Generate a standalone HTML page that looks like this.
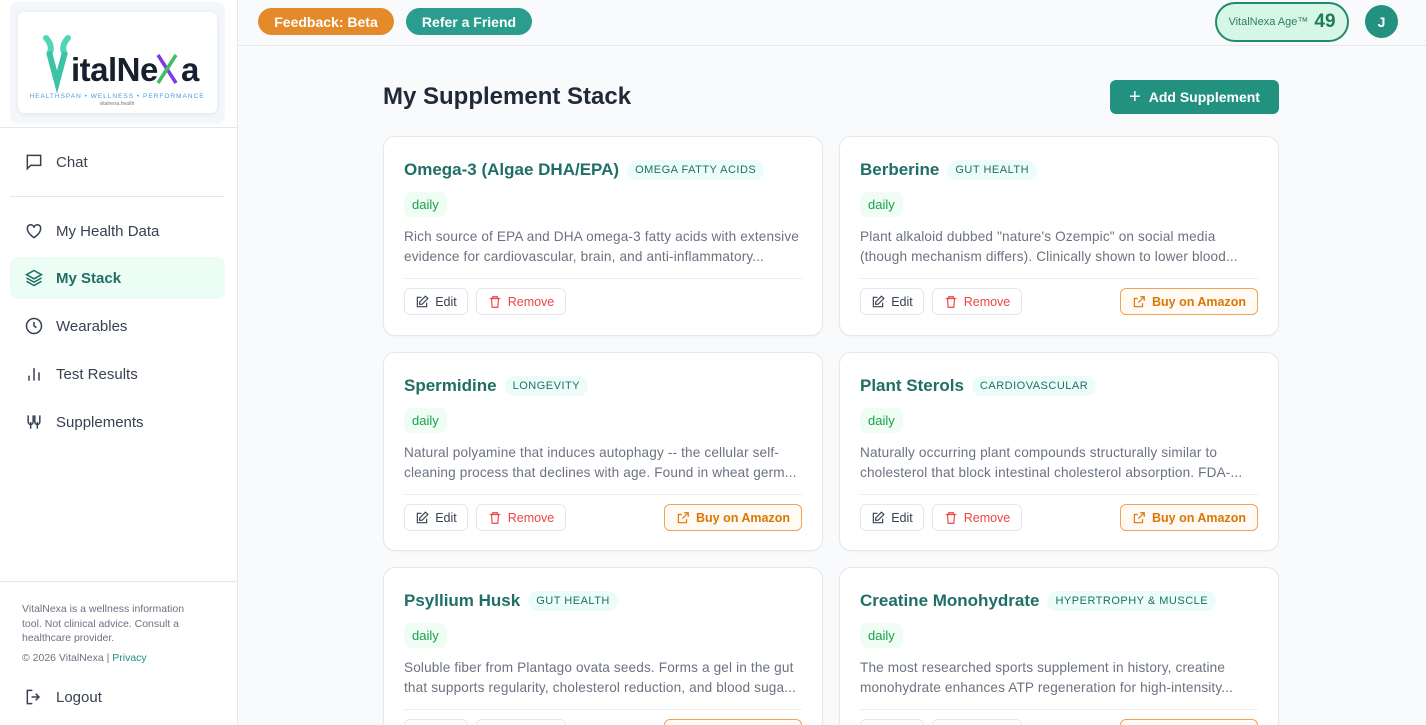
<!DOCTYPE html>
<html style="width:1426px;height:725px;overflow:hidden"><head><meta charset="utf-8"><style>
*{box-sizing:border-box;margin:0;padding:0}
body{width:1426px;height:725px;overflow:hidden;font-family:"Liberation Sans",sans-serif;background:#f9fafb;position:relative;color:#1f2937}
.sb{position:absolute;left:0;top:0;width:238px;height:725px;background:#fff;border-right:1px solid #e5e7eb}
.logo{position:absolute;left:10px;top:2px;width:215px;height:122px;background:#f3f6fa;border-radius:8px}
.logo .in{position:absolute;left:8px;top:10px;width:199px;height:101px;background:#fff;border-radius:6px;box-shadow:0 1px 4px rgba(0,0,0,.08)}
.nav{position:absolute;left:10px;width:215px;height:42px;display:flex;align-items:center;padding-left:14px;font-size:15px;color:#374151}
.nav svg{width:20px;height:20px;margin-right:12px;stroke:#374151;fill:none;stroke-width:1.8}
.nav.act{background:#ecfdf5;border-radius:8px;color:#1f6f66;font-weight:bold}
.nav.act svg{stroke:#1f6f66}
.hr{position:absolute;left:10px;width:215px;border-top:1px solid #e5e7eb}
.top{position:absolute;left:238px;top:0;right:0;height:46px;border-bottom:1px solid #e5e7eb;background:#f9fafb}
.pill{position:absolute;top:8px;height:27px;border-radius:14px;color:#fff;font-weight:bold;font-size:14px;display:flex;align-items:center;justify-content:center}
.card{position:absolute;width:440px;background:#fff;border:1px solid #e5e7eb;border-radius:12px;box-shadow:0 1px 2px rgba(0,0,0,.04);overflow:hidden}
.card h3{position:absolute;left:20px;top:23px;font-size:17px;color:#1f6f66;font-weight:bold;display:flex;align-items:center;white-space:nowrap}
.tag{margin-left:8px;background:#ecfdf9;color:#1f6f66;font-size:11px;font-weight:normal;letter-spacing:.5px;padding:4px 8px;border-radius:10px}
.daily{position:absolute;left:20px;top:55px;background:#f0fdf4;color:#16a34a;font-size:13px;padding:5px 8px;border-radius:7px}
.desc{position:absolute;left:20px;top:90px;width:402px;font-size:13.6px;letter-spacing:.15px;line-height:20px;color:#6b7280;white-space:nowrap}
.line{position:absolute;left:20px;right:20px;top:141px;border-top:1px solid #eee}
.btn{position:absolute;top:151px;height:27px;border:1px solid #e5e7eb;border-radius:6px;font-size:12.5px;display:flex;align-items:center;justify-content:center;gap:6px}
.btn svg{width:14px;height:14px;fill:none;stroke-width:2}
.amz{right:20px;width:138px;border-color:#f0a35a;background:#fffaf3;color:#d97706;font-weight:bold}
</style></head><body>
<div class="sb">
 <div class="logo"><div class="in">
  <svg width="199" height="101" viewBox="0 0 199 101">
   <path d="M28 26c4 4 6 10 4 14M50 26c-4 4-6 10-4 14" stroke="#4fd6b5" stroke-width="6" fill="none" stroke-linecap="round"/>
   <path d="M31 40l8 30 8-30" stroke="#3cc2a5" stroke-width="6" fill="none"/>
   <text x="53" y="69" font-size="33" font-weight="bold" fill="#17202e" font-family="Liberation Sans" letter-spacing="-0.5">italNe</text>
   <path d="M140 43l18 28" stroke-width="3.5" stroke="#7c3aed"/>
   <path d="M158 43l-18 28" stroke-width="3.5" stroke="#3fbf5f"/>
   <text x="163" y="69" font-size="33" font-weight="bold" fill="#17202e" font-family="Liberation Sans">a</text>
   <text x="99" y="86" font-size="6.5" fill="#4b9bd8" text-anchor="middle" letter-spacing="1">HEALTHSPAN • WELLNESS • PERFORMANCE</text>
   <text x="99" y="93" font-size="5" fill="#777" text-anchor="middle">vitalnexa.health</text>
  </svg></div></div>
 <div class="hr" style="top:127px;left:0;width:237px"></div>
 <div class="nav" style="top:141px"><svg viewBox="0 0 24 24"><path d="M4 4h16v12H8l-4 4z"/></svg>Chat</div>
 <div class="hr" style="top:196px"></div>
 <div class="nav" style="top:210px"><svg viewBox="0 0 24 24"><path d="M12 20s-8-5-8-11a4 4 0 0 1 8-1 4 4 0 0 1 8 1c0 6-8 11-8 11z"/></svg>My Health Data</div>
 <div class="nav act" style="top:257px"><svg viewBox="0 0 24 24"><path d="M12 3l9 5-9 5-9-5zM3 12l9 5 9-5M3 16l9 5 9-5"/></svg>My Stack</div>
 <div class="nav" style="top:305px"><svg viewBox="0 0 24 24"><circle cx="12" cy="12" r="9"/><path d="M12 7v5l3 2"/></svg>Wearables</div>
 <div class="nav" style="top:353px"><svg viewBox="0 0 24 24"><path d="M6 20v-6M12 20V5M18 20v-10"/></svg>Test Results</div>
 <div class="nav" style="top:401px"><svg viewBox="0 0 24 24"><path d="M5 4v8a3 3 0 0 0 6 0V4M13 4v8a3 3 0 0 0 6 0V4M8 12v8M16 12v8"/></svg>Supplements</div>
 <div class="hr" style="top:581px;left:0;width:237px"></div>
 <div style="position:absolute;left:22px;top:602px;width:178px;font-size:10.5px;line-height:14.5px;color:#6b7280">VitalNexa is a wellness information tool. Not clinical advice. Consult a healthcare provider.<div style="margin-top:5px">© 2026 VitalNexa | <span style="color:#1f8f80">Privacy</span></div></div>
 <div class="nav" style="top:676px"><svg viewBox="0 0 24 24"><path d="M10 4H4v16h6M14 8l4 4-4 4M18 12H9"/></svg>Logout</div>
</div>
<div class="top">
 <div class="pill" style="left:20px;width:136px;background:#e58a2b">Feedback: Beta</div>
 <div class="pill" style="left:168px;width:126px;background:#2a9d8f">Refer a Friend</div>
 <div style="position:absolute;left:977px;top:2px;width:134px;height:40px;border:2px solid #22896f;border-radius:20px;background:#d6f7e6;display:flex;align-items:center;justify-content:center;gap:6px"><span style="font-size:11px;color:#2f7d63">VitalNexa Age™</span><span style="font-size:19px;font-weight:bold;color:#1f7a5c">49</span></div>
 <div style="position:absolute;left:1127px;top:5px;width:33px;height:33px;border-radius:50%;background:#23917f;color:#fff;font-weight:bold;font-size:14px;display:flex;align-items:center;justify-content:center">J</div>
</div>
<div style="position:absolute;left:383px;top:83px;font-size:24px;font-weight:bold;color:#1f2937">My Supplement Stack</div>
<div style="position:absolute;left:1110px;top:80px;width:169px;height:34px;background:#23917f;border-radius:6px;color:#fff;font-weight:bold;font-size:14px;display:flex;align-items:center;justify-content:center"><span style="font-size:20px;font-weight:normal;margin-right:8px">+</span>Add Supplement</div>

<div class="card" style="left:383px;top:136px;height:200px"><h3>Omega-3 (Algae DHA/EPA)<span class="tag">OMEGA FATTY ACIDS</span></h3><div class="daily">daily</div><div class="desc">Rich source of EPA and DHA omega-3 fatty acids with extensive<br>evidence for cardiovascular, brain, and anti-inflammatory...</div><div class="line"></div>
<div class="btn" style="left:20px;width:64px;color:#374151"><svg viewBox="0 0 24 24" stroke="#374151"><path d="M11 4H4v16h16v-7M18 2l4 4-10 10H8v-4z"/></svg>Edit</div><div class="btn" style="left:92px;width:90px;color:#ef4444"><svg viewBox="0 0 24 24" stroke="#ef4444"><path d="M3 6h18M8 6V3h8v3M6 6l1 15h10l1-15"/></svg>Remove</div></div>

<div class="card" style="left:839px;top:136px;height:200px"><h3>Berberine<span class="tag">GUT HEALTH</span></h3><div class="daily">daily</div><div class="desc">Plant alkaloid dubbed "nature's Ozempic" on social media<br>(though mechanism differs). Clinically shown to lower blood...</div><div class="line"></div>
<div class="btn" style="left:20px;width:64px;color:#374151"><svg viewBox="0 0 24 24" stroke="#374151"><path d="M11 4H4v16h16v-7M18 2l4 4-10 10H8v-4z"/></svg>Edit</div><div class="btn" style="left:92px;width:90px;color:#ef4444"><svg viewBox="0 0 24 24" stroke="#ef4444"><path d="M3 6h18M8 6V3h8v3M6 6l1 15h10l1-15"/></svg>Remove</div><div class="btn amz"><svg viewBox="0 0 24 24" stroke="#d97706"><path d="M14 3h7v7M21 3l-10 10M18 14v6H4V6h6"/></svg>Buy on Amazon</div></div>

<div class="card" style="left:383px;top:352px;height:199px"><h3>Spermidine<span class="tag">LONGEVITY</span></h3><div class="daily">daily</div><div class="desc">Natural polyamine that induces autophagy -- the cellular self-<br>cleaning process that declines with age. Found in wheat germ...</div><div class="line"></div>
<div class="btn" style="left:20px;width:64px;color:#374151"><svg viewBox="0 0 24 24" stroke="#374151"><path d="M11 4H4v16h16v-7M18 2l4 4-10 10H8v-4z"/></svg>Edit</div><div class="btn" style="left:92px;width:90px;color:#ef4444"><svg viewBox="0 0 24 24" stroke="#ef4444"><path d="M3 6h18M8 6V3h8v3M6 6l1 15h10l1-15"/></svg>Remove</div><div class="btn amz"><svg viewBox="0 0 24 24" stroke="#d97706"><path d="M14 3h7v7M21 3l-10 10M18 14v6H4V6h6"/></svg>Buy on Amazon</div></div>

<div class="card" style="left:839px;top:352px;height:199px"><h3>Plant Sterols<span class="tag">CARDIOVASCULAR</span></h3><div class="daily">daily</div><div class="desc">Naturally occurring plant compounds structurally similar to<br>cholesterol that block intestinal cholesterol absorption. FDA-...</div><div class="line"></div>
<div class="btn" style="left:20px;width:64px;color:#374151"><svg viewBox="0 0 24 24" stroke="#374151"><path d="M11 4H4v16h16v-7M18 2l4 4-10 10H8v-4z"/></svg>Edit</div><div class="btn" style="left:92px;width:90px;color:#ef4444"><svg viewBox="0 0 24 24" stroke="#ef4444"><path d="M3 6h18M8 6V3h8v3M6 6l1 15h10l1-15"/></svg>Remove</div><div class="btn amz"><svg viewBox="0 0 24 24" stroke="#d97706"><path d="M14 3h7v7M21 3l-10 10M18 14v6H4V6h6"/></svg>Buy on Amazon</div></div>

<div class="card" style="left:383px;top:567px;height:199px"><h3>Psyllium Husk<span class="tag">GUT HEALTH</span></h3><div class="daily">daily</div><div class="desc">Soluble fiber from Plantago ovata seeds. Forms a gel in the gut<br>that supports regularity, cholesterol reduction, and blood suga...</div><div class="line"></div>
<div class="btn" style="left:20px;width:64px"></div><div class="btn" style="left:92px;width:90px"></div><div class="btn amz"></div></div>

<div class="card" style="left:839px;top:567px;height:199px"><h3>Creatine Monohydrate<span class="tag">HYPERTROPHY &amp; MUSCLE</span></h3><div class="daily">daily</div><div class="desc">The most researched sports supplement in history, creatine<br>monohydrate enhances ATP regeneration for high-intensity...</div><div class="line"></div>
<div class="btn" style="left:20px;width:64px"></div><div class="btn" style="left:92px;width:90px"></div><div class="btn amz"></div></div>
</body></html>
